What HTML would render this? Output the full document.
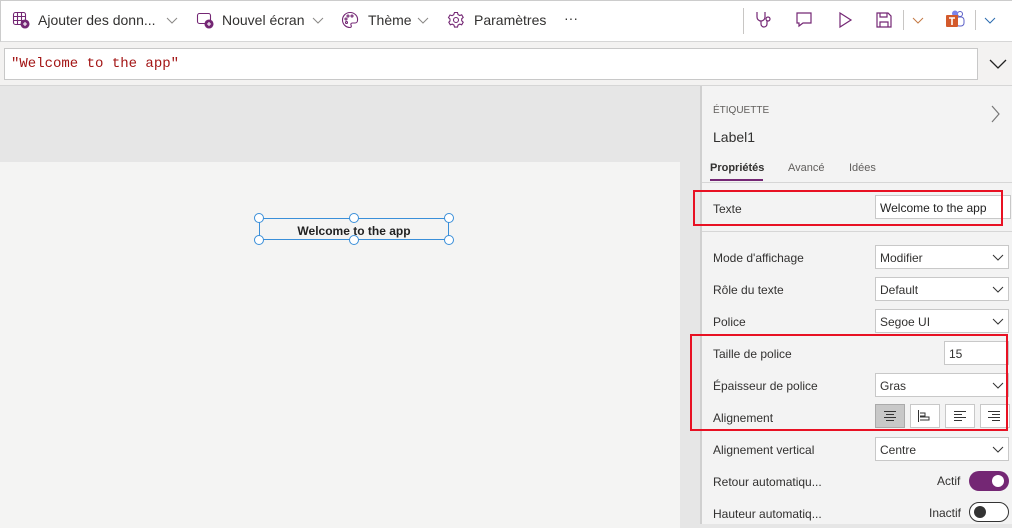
<!DOCTYPE html>
<html><head><meta charset="utf-8"><style>
*{box-sizing:border-box;margin:0;padding:0}
body{width:1012px;height:528px;overflow:hidden;background:#e6e6e6;font-family:"Liberation Sans",sans-serif;font-size:12px;color:#323130;position:relative}
.abs{position:absolute}
.tb{left:0;top:0;width:1012px;height:42px;background:#fff;border-bottom:1px solid #d6d6d6;border-top:1px solid #ccc;border-left:1px solid #ccc}
.tbi{top:12px;font-size:14px;color:#323130;white-space:nowrap}
.fb{left:0;top:42px;width:1012px;height:44px;background:#f3f2f1;border-bottom:1px solid #d6d6d6}
.fin{left:4px;top:48px;width:974px;height:32px;background:#fff;border:1px solid #c8c8c8;font-family:"Liberation Mono",monospace;font-size:14px;color:#a31515;padding:7px 6px}
.canvas{left:0;top:162px;width:680px;height:366px;background:#f4f4f3}
.panel{left:700px;top:86px;width:312px;height:438px;background:#f3f3f3;border-left:2px solid #d0d0d0}
.lbl{left:713px;font-size:12px;color:#323130}
.dd{left:875px;width:134px;height:24px;background:#fff;border:1px solid #c8c8c8;font-size:12px;padding:5px 4px}
.dd svg{position:absolute;right:4px;top:8px}
.red{border:2px solid #e81123}
.h{border:1.5px solid #3a8fd9;background:#fff;width:10px;height:10px;border-radius:50%;position:absolute}
.ab{top:404px;width:30px;height:24px;background:#fff;border:1px solid #c8c8c8}
</style></head><body>
<div class="abs tb"></div>
<svg class="abs" style="left:12px;top:11px" width="18" height="18" viewBox="0 0 18 18" fill="none" stroke="#742774" stroke-width="1.1"><rect x="1.5" y="1.5" width="12" height="12" rx="2"/><path d="M1.5 5.5h12M1.5 9.5h12M5.5 1.5v12M9.5 1.5v12"/><circle cx="13" cy="13" r="4" fill="#742774"/><path d="M13 11v4M11 13h4" stroke="#fff"/></svg>
<div class="abs tbi" style="left:38px">Ajouter des donn...</div>
<svg class="abs" style="left:166px;top:17px" width="12" height="8"><path d="M1 1l5 5 5-5" fill="none" stroke="#8a8886"/></svg>
<svg class="abs" style="left:196px;top:11px" width="18" height="18" viewBox="0 0 18 18" fill="none" stroke="#742774" stroke-width="1.1"><rect x="1.5" y="2.5" width="13" height="10" rx="2"/><circle cx="13" cy="13" r="4" fill="#742774"/><path d="M13 11v4M11 13h4" stroke="#fff"/></svg>
<div class="abs tbi" style="left:222px">Nouvel écran</div>
<svg class="abs" style="left:312px;top:17px" width="12" height="8"><path d="M1 1l5 5 5-5" fill="none" stroke="#8a8886"/></svg>
<svg class="abs" style="left:341px;top:11px" width="18" height="18" viewBox="0 0 18 18" fill="none" stroke="#742774" stroke-width="1.1"><path d="M9 1.5a7.5 7.5 0 1 0 0 15c1.5 0 1.5-1.5 1-2.5s0-2 1.5-2H14a2.5 2.5 0 0 0 2.5-2.5A7.5 7 0 0 0 9 1.5z"/><circle cx="5" cy="8" r="1"/><circle cx="7" cy="5" r="1"/><circle cx="11" cy="5" r="1"/><circle cx="5.5" cy="11.5" r="1"/></svg>
<div class="abs tbi" style="left:368px">Thème</div>
<svg class="abs" style="left:417px;top:17px" width="12" height="8"><path d="M1 1l5 5 5-5" fill="none" stroke="#8a8886"/></svg>
<svg class="abs" style="left:447px;top:11px" width="18" height="18" viewBox="0 0 18 18" fill="none" stroke="#742774" stroke-width="1.1"><circle cx="9" cy="9" r="2.5"/><path d="M7.5 1.5h3l.5 2 1.7 1 2-.7 1.5 2.6-1.5 1.4v2l1.5 1.4-1.5 2.6-2-.7-1.7 1-.5 2h-3l-.5-2-1.7-1-2 .7-1.5-2.6L3 10V8L1.5 6.6 3 4l2 .7 1.7-1z"/></svg>
<div class="abs tbi" style="left:474px">Paramètres</div>
<div class="abs tbi" style="left:564px;top:10px">···</div>
<div class="abs" style="left:743px;top:8px;width:1px;height:26px;background:#c8c6c4"></div>
<svg class="abs" style="left:754px;top:10px" width="20" height="20" viewBox="0 0 20 20" fill="none" stroke="#742774" stroke-width="1.2"><path d="M3 2v5a4 4 0 0 0 8 0V2M7 11v3a3 3 0 0 0 6 0v-3"/><circle cx="14" cy="9" r="2"/></svg>
<svg class="abs" style="left:794px;top:10px" width="20" height="20" viewBox="0 0 20 20" fill="none" stroke="#742774" stroke-width="1.2"><path d="M3 3h14v10H9l-4 3v-3H3z"/></svg>
<svg class="abs" style="left:836px;top:10px" width="18" height="20" viewBox="0 0 18 20" fill="none" stroke="#742774" stroke-width="1.2"><path d="M4 3l11 7-11 7z"/></svg>
<svg class="abs" style="left:874px;top:10px" width="20" height="20" viewBox="0 0 20 20" fill="none" stroke="#742774" stroke-width="1.2"><path d="M3 3h11l3 3v11H3z"/><path d="M6 3v4h7V3M6 17v-5h8v5"/></svg>
<div class="abs" style="left:903px;top:10px;width:1px;height:20px;background:#c8c6c4"></div>
<svg class="abs" style="left:912px;top:17px" width="12" height="8"><path d="M1 1l5 5 5-5" fill="none" stroke="#c47a45"/></svg>
<svg class="abs" style="left:944px;top:9px" width="22" height="22" viewBox="0 0 22 22"><circle cx="16" cy="5" r="2.5" fill="none" stroke="#5b5fc7"/><circle cx="11" cy="4.5" r="3" fill="#7b83eb"/><rect x="12" y="8" width="8" height="9" rx="3" fill="none" stroke="#5b5fc7"/><rect x="2" y="6" width="12" height="12" rx="1" fill="#d35a2c"/><path d="M5 9h6M8 9v7" stroke="#fff" stroke-width="1.6"/></svg>
<div class="abs" style="left:975px;top:10px;width:1px;height:20px;background:#c8c6c4"></div>
<svg class="abs" style="left:984px;top:17px" width="12" height="8"><path d="M1 1l5 5 5-5" fill="none" stroke="#2b6cb0"/></svg>

<div class="abs fb"></div>
<div class="abs fin">"Welcome to the app"</div>
<svg class="abs" style="left:989px;top:58px" width="18" height="12"><path d="M1 2l8 8 8-8" fill="none" stroke="#222" stroke-width="1.3"/></svg>

<div class="abs canvas"></div>
<div class="abs" style="left:259px;top:218px;width:190px;height:22px;border:1.5px solid #3a8fd9"></div>
<div class="abs" style="left:259px;top:224px;width:190px;text-align:center;font-weight:bold;font-size:12px;color:#222">Welcome to the app</div>
<div class="h" style="left:254px;top:213px"></div><div class="h" style="left:349px;top:213px"></div><div class="h" style="left:444px;top:213px"></div>
<div class="h" style="left:254px;top:235px"></div><div class="h" style="left:349px;top:235px"></div><div class="h" style="left:444px;top:235px"></div>

<div class="abs panel"></div>
<div class="abs lbl" style="top:105px;font-size:10px;color:#605e5c">ÉTIQUETTE</div>
<svg class="abs" style="left:990px;top:105px" width="10" height="18"><path d="M2 1l7 8-7 8" fill="none" stroke="#777" stroke-width="1.2"/></svg>
<div class="abs lbl" style="top:129px;font-size:14px">Label1</div>
<div class="abs lbl" style="left:710px;top:162px;font-weight:bold;font-size:11px">Propriétés</div>
<div class="abs" style="left:710px;top:179px;width:53px;height:2px;background:#742774"></div>
<div class="abs lbl" style="left:788px;top:162px;font-size:11px;color:#605e5c">Avancé</div>
<div class="abs lbl" style="left:849px;top:162px;font-size:11px;color:#605e5c">Idées</div>
<div class="abs" style="left:702px;top:182px;width:310px;height:1px;background:#d6d6d6"></div>
<div class="abs lbl" style="top:202px">Texte</div>
<div class="abs dd" style="top:195px;width:136px;padding:5px 4px;color:#222">Welcome to the app</div>
<div class="abs red" style="left:693px;top:190px;width:310px;height:36px"></div>
<div class="abs" style="left:702px;top:231px;width:310px;height:1px;background:#d6d6d6"></div>

<div class="abs lbl" style="top:251px">Mode d'affichage</div>
<div class="abs dd" style="top:245px">Modifier<svg width="12" height="8"><path d="M1 1l5 5 5-5" fill="none" stroke="#333"/></svg></div>
<div class="abs lbl" style="top:283px">Rôle du texte</div>
<div class="abs dd" style="top:277px">Default<svg width="12" height="8"><path d="M1 1l5 5 5-5" fill="none" stroke="#333"/></svg></div>
<div class="abs lbl" style="top:315px">Police</div>
<div class="abs dd" style="top:309px">Segoe UI<svg width="12" height="8"><path d="M1 1l5 5 5-5" fill="none" stroke="#333"/></svg></div>
<div class="abs lbl" style="top:347px">Taille de police</div>
<div class="abs dd" style="left:944px;width:65px;top:341px">15</div>
<div class="abs lbl" style="top:379px">Épaisseur de police</div>
<div class="abs dd" style="top:373px">Gras<svg width="12" height="8"><path d="M1 1l5 5 5-5" fill="none" stroke="#333"/></svg></div>
<div class="abs lbl" style="top:411px">Alignement</div>
<div class="abs ab" style="left:875px;background:#c8c8c8;border-color:#aaa"></div>
<svg class="abs" style="left:883px;top:410px" width="14" height="12"><path d="M1 1.5h12M3 4.5h8M1 7.5h12M3 10.5h8" stroke="#333"/></svg>
<div class="abs ab" style="left:910px"></div>
<svg class="abs" style="left:917px;top:409px" width="14" height="14"><path d="M1.5 1v12M3 4h5v3H3M3 8h9v3H3" fill="none" stroke="#333"/></svg>
<div class="abs ab" style="left:945px"></div>
<svg class="abs" style="left:953px;top:410px" width="14" height="12"><path d="M1 1.5h12M1 4.5h8M1 7.5h12M1 10.5h8" stroke="#333"/></svg>
<div class="abs ab" style="left:980px"></div>
<svg class="abs" style="left:987px;top:410px" width="14" height="12"><path d="M1 1.5h12M5 4.5h8M1 7.5h12M5 10.5h8" stroke="#333"/></svg>
<div class="abs red" style="left:690px;top:334px;width:318px;height:97px"></div>
<div class="abs lbl" style="top:443px">Alignement vertical</div>
<div class="abs dd" style="top:437px">Centre<svg width="12" height="8"><path d="M1 1l5 5 5-5" fill="none" stroke="#333"/></svg></div>
<div class="abs lbl" style="top:475px">Retour automatiqu...</div>
<div class="abs lbl" style="left:937px;top:474px">Actif</div>
<div class="abs" style="left:969px;top:471px;width:40px;height:20px;border-radius:10px;background:#742774"></div>
<div class="abs" style="left:992px;top:475px;width:12px;height:12px;border-radius:50%;background:#fff"></div>
<div class="abs lbl" style="top:507px">Hauteur automatiq...</div>
<div class="abs lbl" style="left:929px;top:506px">Inactif</div>
<div class="abs" style="left:969px;top:502px;width:40px;height:20px;border-radius:10px;background:#fff;border:1px solid #333"></div>
<div class="abs" style="left:974px;top:506px;width:12px;height:12px;border-radius:50%;background:#333"></div>
</body></html>
